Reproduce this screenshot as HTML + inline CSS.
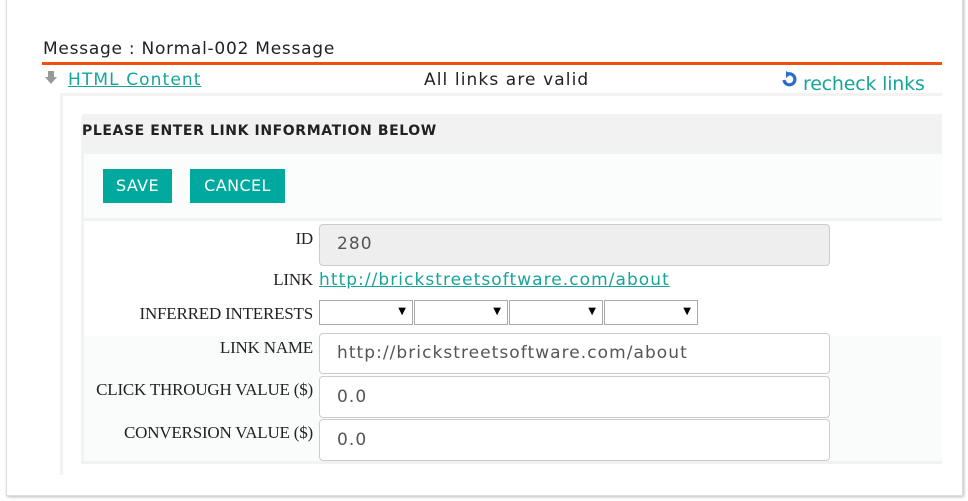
<!DOCTYPE html>
<html><head><meta charset="utf-8"><style>
body{margin:0;width:968px;height:501px;background:#fff;position:relative;overflow:hidden;font-family:"DejaVu Sans","Liberation Sans",sans-serif}
.a{position:absolute}
.frame{left:6px;top:-5px;width:955px;height:499px;border:1px solid #ddd;box-shadow:1px 1px 3px #bbb;background:#fff}
.sans{font-family:"DejaVu Sans",sans-serif;letter-spacing:1px}
.lbl{font-family:"Liberation Serif",serif;font-size:17px;color:#222;right:655px;text-align:right;letter-spacing:-0.2px}
.inp{left:319px;width:511px;border:1px solid #ccc;border-radius:4px;background:#fff;font-family:"DejaVu Sans",sans-serif;letter-spacing:1.05px;font-size:17px;color:#555;box-sizing:border-box;padding-left:17px}
.sel{top:300px;height:25px;border:1px solid #aaa;box-sizing:border-box;background:#fff;font-size:10px}
.sel span{position:absolute;right:6px;top:5px}
.btn{top:169px;height:34px;background:#00a99d;color:#fff;font-family:"DejaVu Sans",sans-serif;font-size:16px;letter-spacing:0.4px;line-height:34px;text-align:center}
</style></head><body>
<div class="a frame"></div>
<div class="a sans" style="left:43px;top:39px;font-size:17px;color:#222;letter-spacing:0.75px">Message : Normal-002 Message</div>
<div class="a" style="left:42px;top:62px;width:900px;height:3px;background:#f24f0c"></div>
<svg class="a" style="left:45px;top:71px" width="12" height="13" viewBox="0 0 12 13"><path d="M3 0h6v6h3l-6 7-6-7h3z" fill="#999"/></svg>
<div class="a sans" style="left:68px;top:70px;font-size:17px;color:#17a59a;text-decoration:underline;letter-spacing:1.1px">HTML Content</div>
<div class="a sans" style="left:424px;top:70px;font-size:17px;color:#222;letter-spacing:1.1px">All links are valid</div>
<svg class="a" style="left:781px;top:71px" width="17" height="16" viewBox="0 0 17 16"><path d="M3 9a5.5 5.5 0 1 0 4-6" fill="none" stroke="#2b6cc4" stroke-width="3.2"/><path d="M5 0l5 3-5 4z" fill="#2b6cc4"/></svg>
<div class="a" style="left:800px;top:73px;height:20px;overflow:hidden"><div style="font-size:19px;color:#17a59a;padding-left:3px;letter-spacing:-0.2px">recheck links</div></div>
<div class="a" style="left:60px;top:93px;width:882px;height:3px;background:#f2f2f2"></div>
<div class="a" style="left:60px;top:93px;width:3px;height:382px;background:#f2f2f2"></div>
<div class="a" style="left:81px;top:114px;width:861px;height:40px;background:#f2f2f2;border-radius:4px 0 0 0"></div>
<div class="a" style="left:82px;top:123px;font-size:14px;font-weight:bold;color:#222;letter-spacing:0.6px">PLEASE ENTER LINK INFORMATION BELOW</div>
<div class="a" style="left:81px;top:154px;width:861px;height:64px;background:#fbfdfd;border-left:3px solid #f2f2f2;box-sizing:border-box"></div>
<div class="a btn" style="left:103px;width:69px">SAVE</div>
<div class="a btn" style="left:190px;width:95px">CANCEL</div>
<div class="a" style="left:81px;top:218px;width:861px;height:3px;background:#f2f2f2"></div>
<div class="a" style="left:81px;top:221px;width:3px;height:243px;background:#f2f2f2"></div>
<div class="a" style="left:84px;top:336px;width:858px;height:125px;background:#fafcfc"></div>
<div class="a" style="left:81px;top:461px;width:861px;height:3px;background:#f2f2f2"></div>
<div class="a lbl" style="top:229px">ID</div>
<div class="a inp" style="top:224px;height:42px;background:#eee;line-height:38px">280</div>
<div class="a lbl" style="top:270px">LINK</div>
<div class="a sans" style="left:319px;top:270px;font-size:17px;color:#17a59a;text-decoration:underline;letter-spacing:1.05px">http://brickstreetsoftware.com/about</div>
<div class="a lbl" style="top:304px">INFERRED INTERESTS</div>
<div class="a sel" style="left:319px;width:94px"><span>▼</span></div>
<div class="a sel" style="left:414px;width:94px"><span>▼</span></div>
<div class="a sel" style="left:509px;width:94px"><span>▼</span></div>
<div class="a sel" style="left:604px;width:94px"><span>▼</span></div>
<div class="a lbl" style="top:338px">LINK NAME</div>
<div class="a inp" style="top:333px;height:41px;line-height:39px">http://brickstreetsoftware.com/about</div>
<div class="a lbl" style="top:380px">CLICK THROUGH VALUE ($)</div>
<div class="a inp" style="top:376px;height:42px;line-height:40px">0.0</div>
<div class="a lbl" style="top:423px">CONVERSION VALUE ($)</div>
<div class="a inp" style="top:419px;height:42px;line-height:40px">0.0</div>
</body></html>
